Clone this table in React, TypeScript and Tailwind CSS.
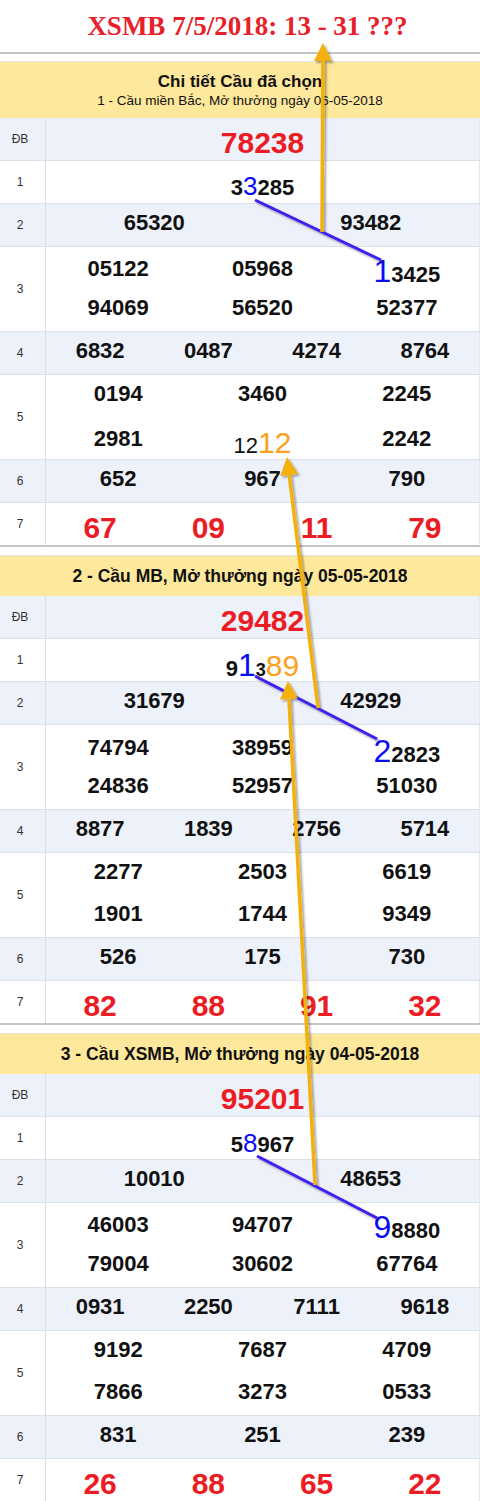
import React from "react";

type Cell = { n: React.ReactNode; p?: string };
type RowDef = { label: string; lines: Cell[][]; red?: boolean };

const BLUE = "text-[#0c0cf4] font-normal";
const ORG = "text-[#fba11b] font-normal";

const c = (n: React.ReactNode, p?: string): Cell => ({ n, p });

const colClass: Record<number, string> = {
  1: "grid-cols-1",
  2: "grid-cols-2",
  3: "grid-cols-3",
  4: "grid-cols-4",
};

function Line({ cells, red }: { cells: Cell[]; red?: boolean }) {
  return (
    <div className={`grid h-[42px] ${colClass[cells.length]}`}>
      {cells.map((cell, i) => (
        <div
          key={i}
          className={`flex items-center justify-center whitespace-nowrap ${
            red
              ? "text-[30px] font-bold text-[#ec1c24]"
              : "text-[22px] font-bold text-[#111]"
          } ${cell.p ?? (red ? "pt-[2px]" : "pb-[5px]")}`}
        >
          <span>{cell.n}</span>
        </div>
      ))}
    </div>
  );
}

function Row({ row, alt, last }: { row: RowDef; alt: boolean; last: boolean }) {
  return (
    <div
      className={`flex border-r border-r-[#e4e7ec] ${alt ? "bg-[#edf1fa]" : "bg-white"} ${
        last ? "" : "border-b border-b-[#dbe1ea]"
      }`}
    >
      <div className="flex w-[46px] shrink-0 items-center justify-center border-r border-r-[#d9dfe8] pr-[5px] text-[12px] text-[#333]">
        {row.label}
      </div>
      <div className="flex flex-1 flex-col">
        {row.lines.map((ln, i) => (
          <Line key={i} cells={ln} red={row.red} />
        ))}
      </div>
    </div>
  );
}

function Section({
  header,
  rows,
  first,
}: {
  header: React.ReactNode;
  rows: RowDef[];
  first?: boolean;
}) {
  return (
    <div
      className={`${first ? "mt-[7px]" : "mt-[8px]"} border-t border-t-[#e3e3e3] border-b-2 border-b-[#c6c6c6]`}
    >
      {header}
      {rows.map((r, i) => (
        <Row key={i} row={r} alt={i % 2 === 0} last={i === rows.length - 1} />
      ))}
    </div>
  );
}

const sec1: RowDef[] = [
  { label: "ĐB", red: true, lines: [[c("78238")]] },
  {
    label: "1",
    lines: [
      [
        c(
          <>
            <span>3</span>
            <span className={`${BLUE} text-[26px]`}>3</span>
            <span>285</span>
          </>,
          "pt-[6px]"
        ),
      ],
    ],
  },
  { label: "2", lines: [[c("65320"), c("93482")]] },
  {
    label: "3",
    lines: [
      [
        c("05122"),
        c("05968"),
        c(
          <>
            <span className={`${BLUE} text-[32px]`}>1</span>
            <span>3425</span>
          </>,
          "pt-[0px]"
        ),
      ],
      [c("94069"), c("56520"), c("52377")],
    ],
  },
  { label: "4", lines: [[c("6832"), c("0487"), c("4274"), c("8764")]] },
  {
    label: "5",
    lines: [
      [c("0194"), c("3460"), c("2245")],
      [
        c("2981"),
        c(
          <>
            <span className="font-normal">12</span>
            <span className={`${ORG} text-[30px]`}>12</span>
          </>,
          "pt-[3px]"
        ),
        c("2242"),
      ],
    ],
  },
  { label: "6", lines: [[c("652"), c("967"), c("790")]] },
  { label: "7", red: true, lines: [[c("67"), c("09"), c("11"), c("79")]] },
];

const sec2: RowDef[] = [
  { label: "ĐB", red: true, lines: [[c("29482")]] },
  {
    label: "1",
    lines: [
      [
        c(
          <>
            <span>9</span>
            <span className={`${BLUE} text-[32px]`}>1</span>
            <span className="text-[18px]">3</span>
            <span className={`${ORG} text-[30px]`}>89</span>
          </>,
          "pt-[2px]"
        ),
      ],
    ],
  },
  { label: "2", lines: [[c("31679"), c("42929")]] },
  {
    label: "3",
    lines: [
      [
        c("74794"),
        c("38959"),
        c(
          <>
            <span className={`${BLUE} text-[32px]`}>2</span>
            <span>2823</span>
          </>,
          "pt-[2px]"
        ),
      ],
      [c("24836"), c("52957"), c("51030")],
    ],
  },
  { label: "4", lines: [[c("8877"), c("1839"), c("2756"), c("5714")]] },
  {
    label: "5",
    lines: [
      [c("2277"), c("2503"), c("6619")],
      [c("1901"), c("1744"), c("9349")],
    ],
  },
  { label: "6", lines: [[c("526"), c("175"), c("730")]] },
  { label: "7", red: true, lines: [[c("82"), c("88"), c("91"), c("32")]] },
];

const sec3: RowDef[] = [
  { label: "ĐB", red: true, lines: [[c("95201")]] },
  {
    label: "1",
    lines: [
      [
        c(
          <>
            <span>5</span>
            <span className={`${BLUE} text-[26px]`}>8</span>
            <span>967</span>
          </>,
          "pt-[7px]"
        ),
      ],
    ],
  },
  { label: "2", lines: [[c("10010"), c("48653")]] },
  {
    label: "3",
    lines: [
      [
        c("46003"),
        c("94707"),
        c(
          <>
            <span className={`${BLUE} text-[32px]`}>9</span>
            <span>8880</span>
          </>,
          "pt-[0px]"
        ),
      ],
      [c("79004"), c("30602"), c("67764")],
    ],
  },
  { label: "4", lines: [[c("0931"), c("2250"), c("7111"), c("9618")]] },
  {
    label: "5",
    lines: [
      [c("9192"), c("7687"), c("4709")],
      [c("7866"), c("3273"), c("0533")],
    ],
  },
  { label: "6", lines: [[c("831"), c("251"), c("239")]] },
  { label: "7", red: true, lines: [[c("26"), c("88"), c("65"), c("22")]] },
];

function Arrow({ x1, y1, tx, ty }: { x1: number; y1: number; tx: number; ty: number }) {
  const dx = tx - x1;
  const dy = ty - y1;
  const L = Math.hypot(dx, dy);
  const ux = dx / L;
  const uy = dy / L;
  const hl = 18;
  const hw = 9;
  const bx = tx - ux * hl;
  const by = ty - uy * hl;
  const px = -uy;
  const py = ux;
  const pts = `${tx},${ty} ${bx + px * hw},${by + py * hw} ${bx - px * hw},${by - py * hw}`;
  return (
    <g>
      <line x1={x1} y1={y1} x2={bx + ux * 2} y2={by + uy * 2} stroke="#f4b10c" strokeWidth={3.5} />
      <polygon points={pts} fill="#f4b10c" />
    </g>
  );
}

export default function App() {
  return (
    <div className="relative h-[1501px] w-[480px] overflow-hidden bg-white font-['Liberation_Sans',Arial,sans-serif]">
      <div className="flex h-[54px] items-center justify-center border-b-2 border-b-[#c4c4c4] pl-[15px] font-['Liberation_Serif','Times_New_Roman',serif] text-[27px] font-bold text-[#e8202a]">
        XSMB 7/5/2018: 13 - 31 ???
      </div>

      <Section
        first
        header={
          <div className="flex h-[56px] flex-col items-center justify-center bg-[#fde89b] text-[#111]">
            <div className="text-[17px] font-bold leading-[20px]">Chi tiết Cầu đã chọn</div>
            <div className="text-[13.5px] leading-[17px]">1 - Cầu miền Bắc, Mở thưởng ngày 06-05-2018</div>
          </div>
        }
        rows={sec1}
      />
      <Section
        header={
          <div className="flex h-[40px] items-center justify-center bg-[#fde89b] text-[17.5px] font-bold text-[#111]">
            2 - Cầu MB, Mở thưởng ngày 05-05-2018
          </div>
        }
        rows={sec2}
      />
      <Section
        header={
          <div className="flex h-[40px] items-center justify-center bg-[#fde89b] text-[17.5px] font-bold text-[#111]">
            3 - Cầu XSMB, Mở thưởng ngày 04-05-2018
          </div>
        }
        rows={sec3}
      />

      <svg
        className="pointer-events-none absolute left-0 top-0"
        width={480}
        height={1501}
        viewBox="0 0 480 1501"
      >
        <defs>
          <filter id="sh" filterUnits="userSpaceOnUse" x="0" y="0" width="480" height="1501">
            <feDropShadow dx="2" dy="2" stdDeviation="1.3" floodColor="#000" floodOpacity="0.35" />
          </filter>
        </defs>
        <g filter="url(#sh)">
          <line x1={255} y1={200} x2={381} y2={260} stroke="#3d20ee" strokeWidth={3} />
          <line x1={255} y1={676} x2={377} y2={739} stroke="#3d20ee" strokeWidth={3} />
          <line x1={257} y1={1156} x2={377} y2={1218} stroke="#3d20ee" strokeWidth={3} />
          <Arrow x1={322} y1={232} tx={323} ty={43} />
          <Arrow x1={318} y1={708} tx={287} ty={457} />
          <Arrow x1={315} y1={1185} tx={288} ty={681} />
        </g>
      </svg>
    </div>
  );
}
